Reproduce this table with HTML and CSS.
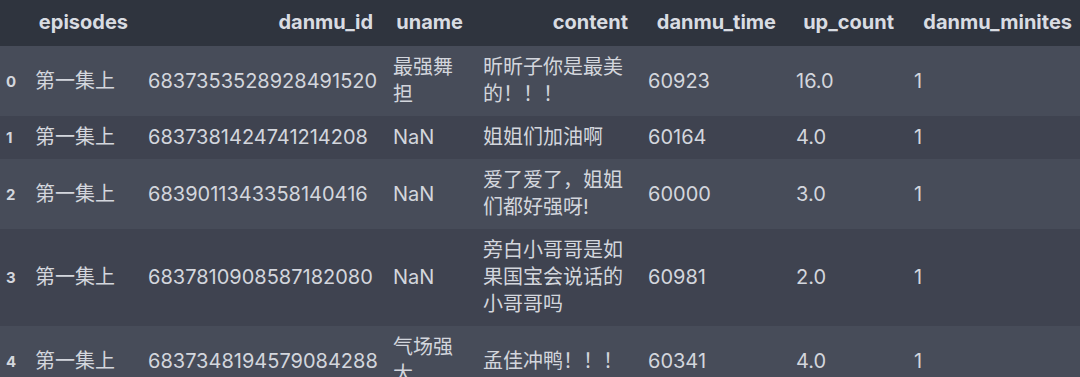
FILE: index.html
```html
<!DOCTYPE html>
<html lang="zh">
<head>
<meta charset="utf-8">
<title>DataFrame</title>
<link rel="stylesheet" href="styles.css">
</head>
<body>
<table class="df">
  <colgroup>
    <col class="c-idx">
    <col class="c-ep">
    <col class="c-id">
    <col class="c-uname">
    <col class="c-content">
    <col class="c-time">
    <col class="c-up">
    <col class="c-min">
  </colgroup>
  <thead>
    <tr>
      <th class="idx"></th>
      <th>episodes</th>
      <th>danmu_id</th>
      <th>uname</th>
      <th>content</th>
      <th>danmu_time</th>
      <th>up_count</th>
      <th>danmu_minites</th>
    </tr>
  </thead>
  <tbody>
    <tr>
      <th class="idx">0</th>
      <td>第一集上</td>
      <td class="num">6837353528928491520</td>
      <td>最强舞担</td>
      <td>昕昕子你是最美的！！！</td>
      <td class="num">60923</td>
      <td class="num">16.0</td>
      <td class="num">1</td>
    </tr>
    <tr>
      <th class="idx">1</th>
      <td>第一集上</td>
      <td class="num">6837381424741214208</td>
      <td>NaN</td>
      <td>姐姐们加油啊</td>
      <td class="num">60164</td>
      <td class="num">4.0</td>
      <td class="num">1</td>
    </tr>
    <tr>
      <th class="idx">2</th>
      <td>第一集上</td>
      <td class="num">6839011343358140416</td>
      <td>NaN</td>
      <td>爱了爱了，姐姐们都好强呀!</td>
      <td class="num">60000</td>
      <td class="num">3.0</td>
      <td class="num">1</td>
    </tr>
    <tr>
      <th class="idx">3</th>
      <td>第一集上</td>
      <td class="num">6837810908587182080</td>
      <td>NaN</td>
      <td>旁白小哥哥是如果国宝会说话的小哥哥吗</td>
      <td class="num">60981</td>
      <td class="num">2.0</td>
      <td class="num">1</td>
    </tr>
    <tr>
      <th class="idx">4</th>
      <td>第一集上</td>
      <td class="num">6837348194579084288</td>
      <td>气场强大</td>
      <td>孟佳冲鸭！！！</td>
      <td class="num">60341</td>
      <td class="num">4.0</td>
      <td class="num">1</td>
    </tr>
  </tbody>
</table>
</body>
</html>
```
FILE: styles.css
```css
html, body {
  margin: 0;
  padding: 0;
  background: #2f343e;
  overflow: hidden;
}

body {
  width: 1080px;
  height: 377px;
}

.df {
  table-layout: fixed;
  width: 1082px;
  border-collapse: collapse;
  border-spacing: 0;
  font-family: Inter, "Liberation Sans", "Noto Sans CJK SC", sans-serif;
  font-size: 20px;
  line-height: 27px;
  color: #d3d6dd;
}

.c-idx { width: 25px; }
.c-ep { width: 113px; }
.c-id { width: 245px; }
.c-uname { width: 90px; }
.c-content { width: 165px; }
.c-time { width: 148px; }
.c-up { width: 118px; }
.c-min { width: 178px; }

.df thead tr {
  background: #2f343e;
}

.df thead th {
  padding: 9px 10px 10px;
  text-align: right;
  font-weight: 700;
  color: #d9dce2;
  white-space: nowrap;
}

.df tbody tr {
  background: #474c59;
}

.df tbody tr:nth-child(even) {
  background: #3f4350;
}

.df td {
  padding: 8px 10px;
  text-align: left;
  vertical-align: middle;
}

.df td.num {
  white-space: nowrap;
}

.df th.idx {
  padding: 8px 10px 8px 6px;
  text-align: left;
  font-size: 15px;
  font-weight: 700;
  vertical-align: middle;
}

.df thead th.idx {
  padding: 9px 10px 10px 6px;
}
```
